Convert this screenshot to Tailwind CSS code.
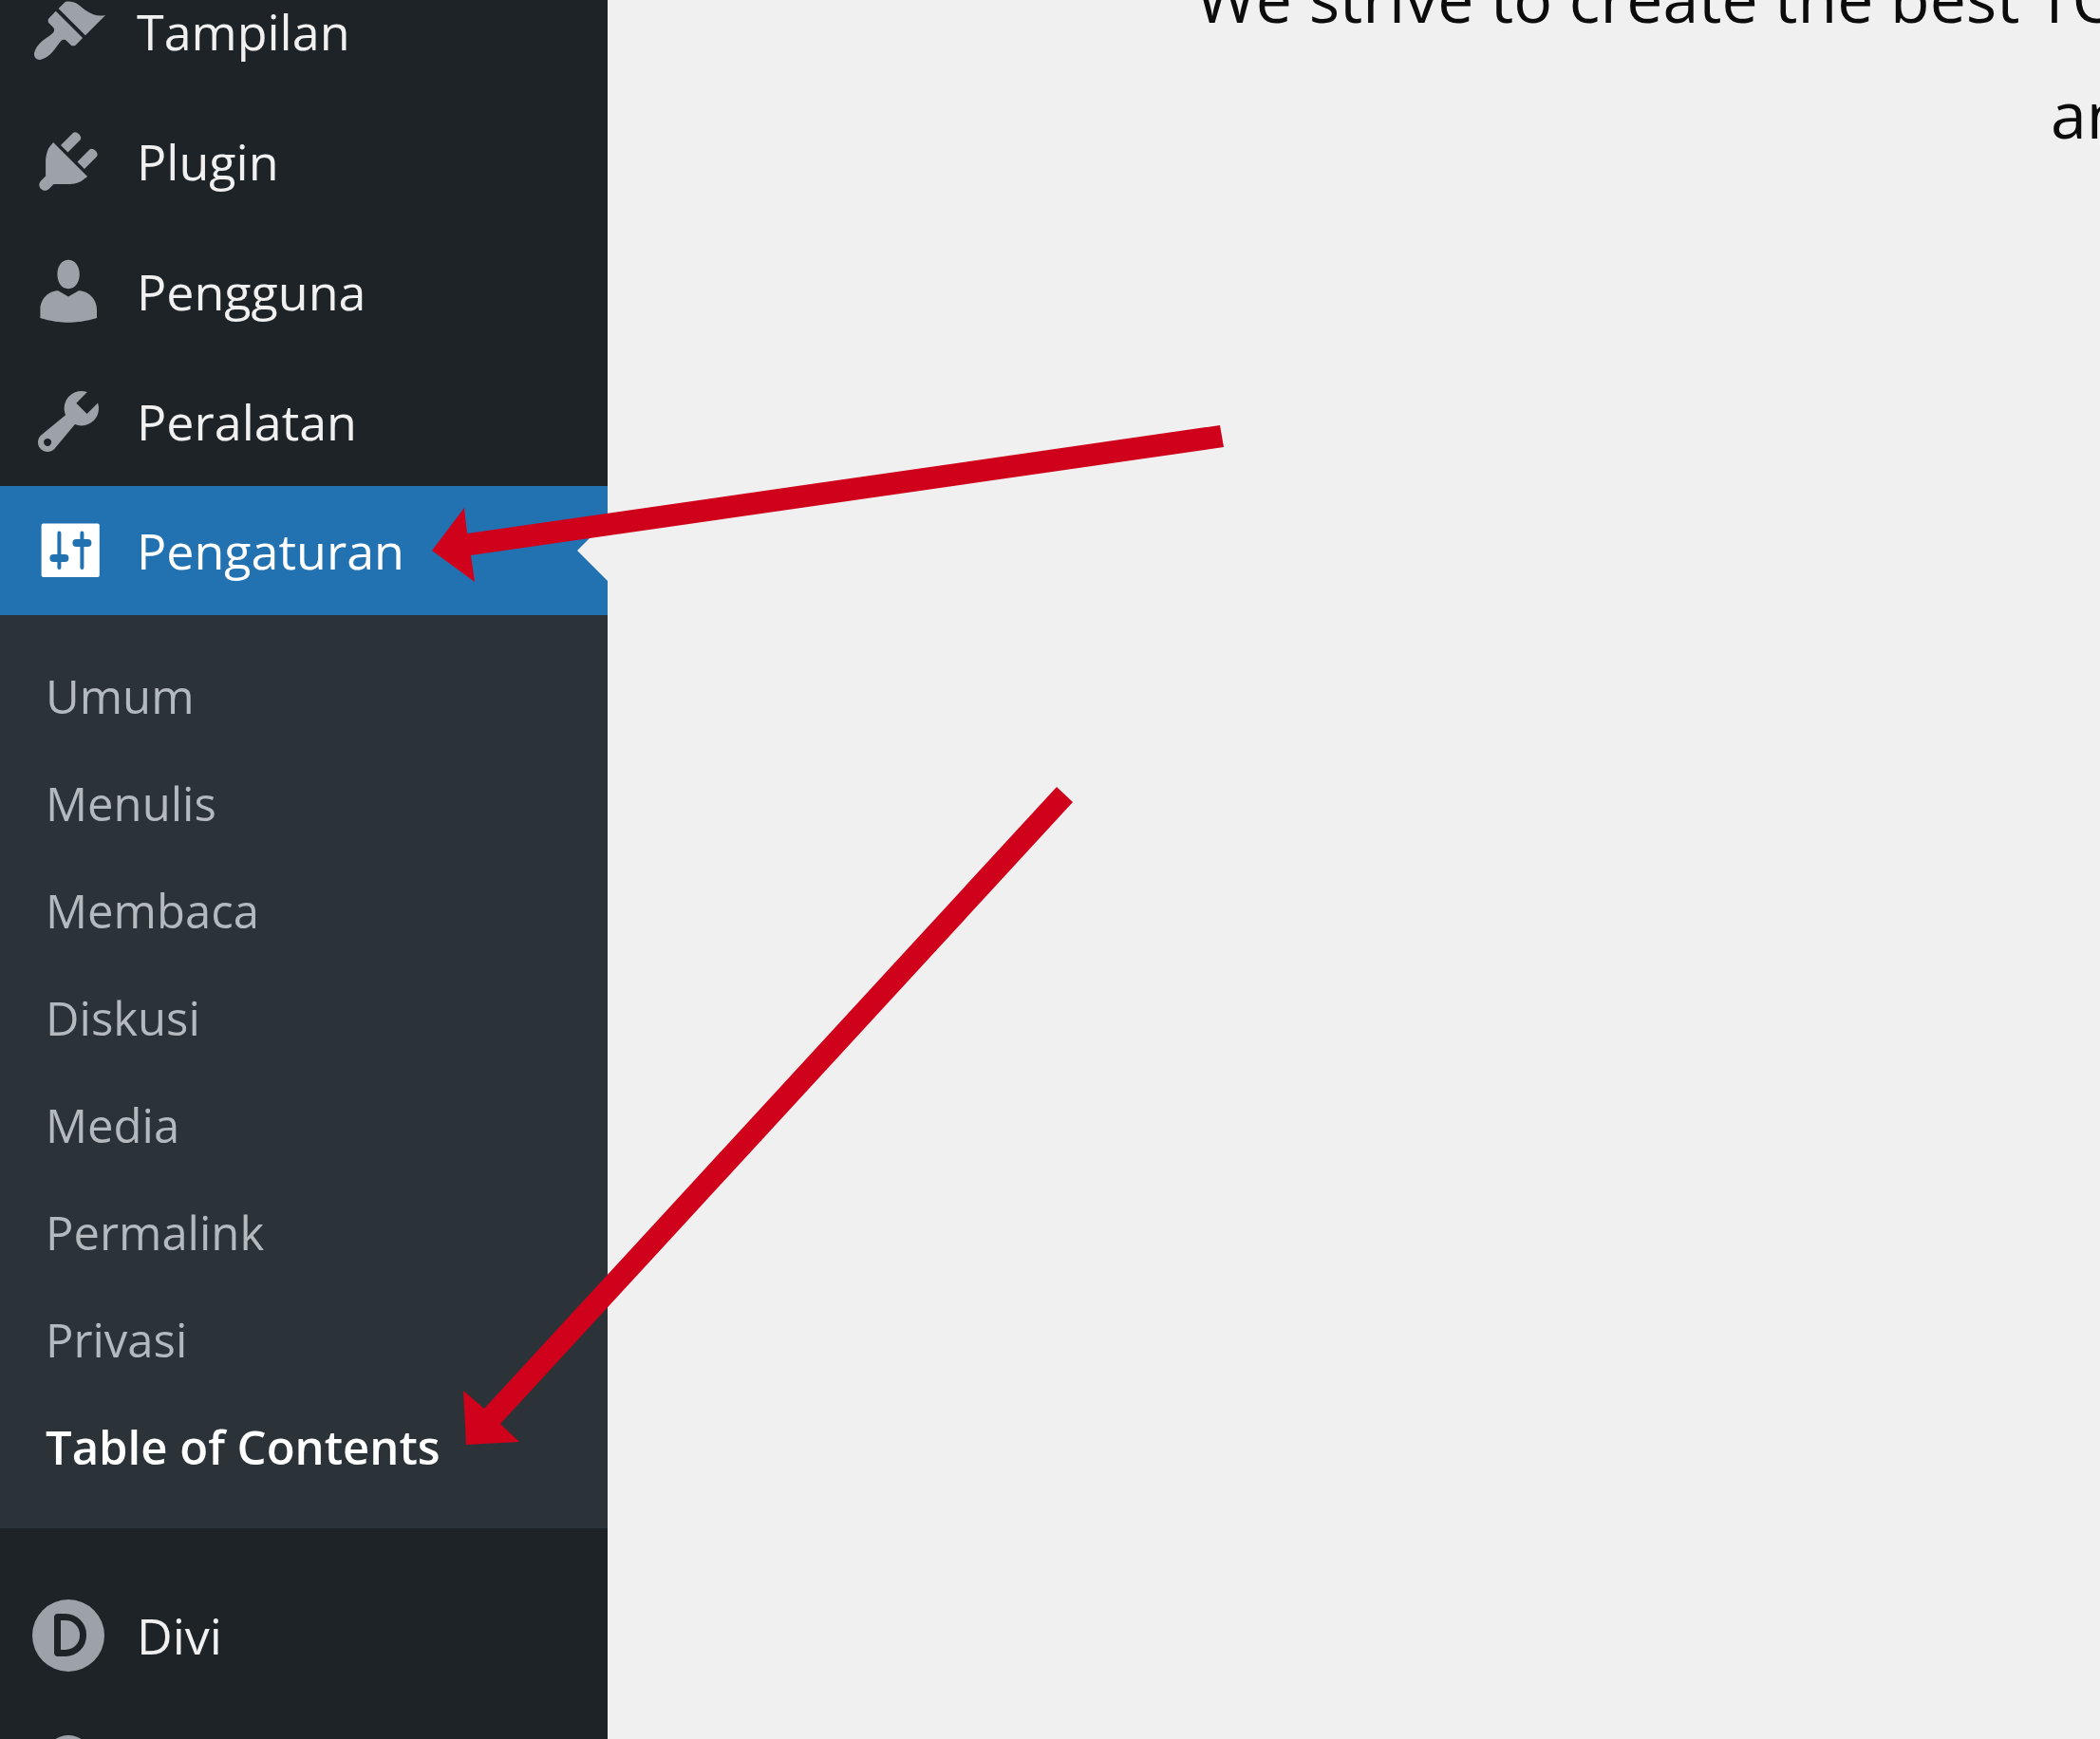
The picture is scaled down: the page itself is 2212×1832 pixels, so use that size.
<!DOCTYPE html>
<html lang="id">
<head>
<meta charset="utf-8">
<meta name="viewport" content="width=device-width, initial-scale=1">
<title>Pengaturan</title>
<script src="https://cdn.jsdelivr.net/npm/@tailwindcss/browser@4"></script>
</head>
<body class="relative flex h-screen overflow-hidden bg-[#f0f0f0] font-['Open_Sans','Noto_Sans',sans-serif]">

<nav aria-label="Menu admin" class="w-[640px] shrink-0 overflow-hidden bg-[#1d2327]">
  <ul class="-mt-9 text-[52px] leading-[68px] text-[#f0f0f1]">
    <li>
      <a href="#" class="flex h-[137px] items-center gap-8 pl-8">
        <svg class="size-20 shrink-0 fill-[#9ca2a7]" viewBox="0 0 20 20" aria-hidden="true"><path d="M14.48 11.06L7.41 3.99l1.5-1.5c.5-.56 2.3-.47 3.51.32 1.21.8 1.43 1.28 2.91 2.1 1.18.64 2.45 1.26 4.45.85zm-.71.71L6.7 4.7 4.93 6.47c-.39.39-.39 1.02 0 1.41l1.06 1.06c.39.39.39 1.03 0 1.42-.6.6-1.43 1.11-2.21 1.69-.35.26-.7.53-1.01.84C1.43 14.23.4 16.08 1.4 17.07c.99 1 2.84-.03 4.18-1.36.31-.31.58-.66.85-1.02.57-.78 1.08-1.61 1.69-2.21.39-.39 1.02-.39 1.41 0l1.06 1.06c.39.39 1.02.39 1.41 0z"/></svg>
        <span>Tampilan</span>
      </a>
    </li>
    <li>
      <a href="#" class="flex h-[137px] items-center gap-8 pl-8">
        <svg class="size-20 shrink-0 fill-[#9ca2a7]" viewBox="0 0 20 20" aria-hidden="true"><path d="M13.11 4.36L9.87 7.6 8 5.73l3.24-3.24c.35-.34 1.05-.2 1.56.32.52.51.66 1.21.31 1.55zm-8 1.77l.91-1.12 9.01 9.01-1.19.84c-.71.71-2.63 1.16-3.82 1.16H6.14L4.9 17.26c-.59.59-1.54.59-2.12 0-.59-.58-.59-1.53 0-2.12l1.24-1.24v-3.88c0-1.13.4-3.19 1.09-3.89zm7.26 3.97l3.24-3.24c.34-.35 1.04-.21 1.55.31.52.51.66 1.21.31 1.55l-3.24 3.25z"/></svg>
        <span>Plugin</span>
      </a>
    </li>
    <li>
      <a href="#" class="flex h-[137px] items-center gap-8 pl-8">
        <svg class="size-20 shrink-0 fill-[#9ca2a7]" viewBox="0 0 20 20" aria-hidden="true"><path d="M10 9.3c-1.9 0-2.9-1.9-2.9-3.8C7.1 3.400 8.200 1.700 10 1.700s2.950 1.700 2.950 3.800c0 1.900-1.050 3.800-2.950 3.800zm0 2.100L12.700 9.800c2.600 0 4.800 2.300 4.800 4.900v2.300s-3.700 1.200-7.500 1.200-7.400-1.200-7.400-1.200v-2.300c0-2.600 2.100-4.900 4.700-4.900z"/></svg>
        <span>Pengguna</span>
      </a>
    </li>
    <li>
      <a href="#" class="flex h-[137px] items-center gap-8 pl-8">
        <svg class="size-20 shrink-0 fill-[#9ca2a7]" viewBox="0 0 20 20" aria-hidden="true"><path d="M16.68 9.77c-1.34 1.34-3.3 1.67-4.95.99l-5.41 6.52c-.99.99-2.59.99-3.58 0s-.99-2.59 0-3.57l6.52-5.42c-.68-1.65-.35-3.61.99-4.95 1.28-1.28 3.12-1.62 4.72-1.06l-2.89 2.89 2.82 2.82 2.86-2.87c.53 1.58.18 3.39-1.08 4.65zM3.81 16.21c.4.39 1.04.39 1.43 0 .4-.4.4-1.04 0-1.43-.39-.4-1.03-.4-1.43 0-.39.39-.39 1.03 0 1.43z"/></svg>
        <span>Peralatan</span>
      </a>
    </li>
    <li>
      <a href="#" class="relative flex h-[136px] items-center gap-8 bg-[#2271b1] pl-8 text-white">
        <svg class="size-20 shrink-0" viewBox="0 0 20 20" aria-hidden="true">
          <rect x="2.900" y="2.900" width="15.300" height="14.100" rx=".5" fill="#fff"/>
          <g stroke="#2271b1" stroke-linecap="round">
            <path d="M7.600 5.400v9.100M13.600 5.400v9.100" stroke-width="1"/>
            <path d="M6.100 12h3M12.100 8h3" stroke-width="2"/>
          </g>
        </svg>
        <span>Pengaturan</span>
        <svg class="absolute right-0 top-9 h-16 w-8 fill-[#f0f0f0]" viewBox="0 0 32 64" aria-hidden="true"><path d="M32 0v64L0 32z"/></svg>
      </a>
      <ul class="bg-[#2c3338] pt-7 pb-[30px] text-[49px] text-[#b4b9be]">
        <li><a href="#" class="flex h-[113px] items-center pl-12">Umum</a></li>
        <li><a href="#" class="flex h-[113px] items-center pl-12">Menulis</a></li>
        <li><a href="#" class="flex h-[113px] items-center pl-12">Membaca</a></li>
        <li><a href="#" class="flex h-[113px] items-center pl-12">Diskusi</a></li>
        <li><a href="#" class="flex h-[113px] items-center pl-12">Media</a></li>
        <li><a href="#" class="flex h-[113px] items-center pl-12">Permalink</a></li>
        <li><a href="#" class="flex h-[113px] items-center pl-12">Privasi</a></li>
        <li><a href="#" aria-current="page" class="flex h-[113px] items-center pl-12 font-semibold text-white">Table of Contents</a></li>
      </ul>
    </li>
    <li class="pt-11">
      <a href="#" class="flex h-[137px] items-center gap-8 pl-8">
        <span class="flex size-20 shrink-0 items-center justify-center" aria-hidden="true">
          <span class="flex size-[76px] items-center justify-center rounded-full bg-[#9ca2a7]">
            <span class="ml-1 h-[45px] w-[34px] rounded-l-[4px] rounded-r-[22px] border-7 border-[#1d2327]"></span>
          </span>
        </span>
        <span>Divi</span>
      </a>
    </li>
    <li>
      <a href="#" aria-label="Menu berikutnya" class="flex h-[137px] items-center pl-8">
        <svg class="size-20 shrink-0 fill-[#9ca2a7]" viewBox="0 0 20 20" aria-hidden="true"><circle cx="10" cy="8.250" r="6.250"/></svg>
      </a>
    </li>
  </ul>
</nav>

<main class="min-w-0 flex-1 overflow-hidden">
  <p class="-mt-[63px] flex flex-col whitespace-nowrap text-[68px] leading-[122px] text-[#0c0c0c]">
    <span class="pl-[620px]">We strive to create the best TO</span>
    <span class="pl-[1520px]">an</span>
  </p>
</main>

<svg class="pointer-events-none absolute left-[455px] top-[448px] h-[166px] w-[834px] fill-[#d0021b]" viewBox="0 0 834 166" aria-hidden="true">
  <path d="M0 132L34 87L37 114L830 0L834 23L41 137L45 165z"/>
</svg>
<svg class="pointer-events-none absolute left-[488px] top-[829px] h-[693px] w-[642px] fill-[#d0021b]" viewBox="0 0 642 693" aria-hidden="true">
  <path d="M3 693L0 636L22 655L625 0L642 16L39 671L59 690z"/>
</svg>

</body>
</html>
